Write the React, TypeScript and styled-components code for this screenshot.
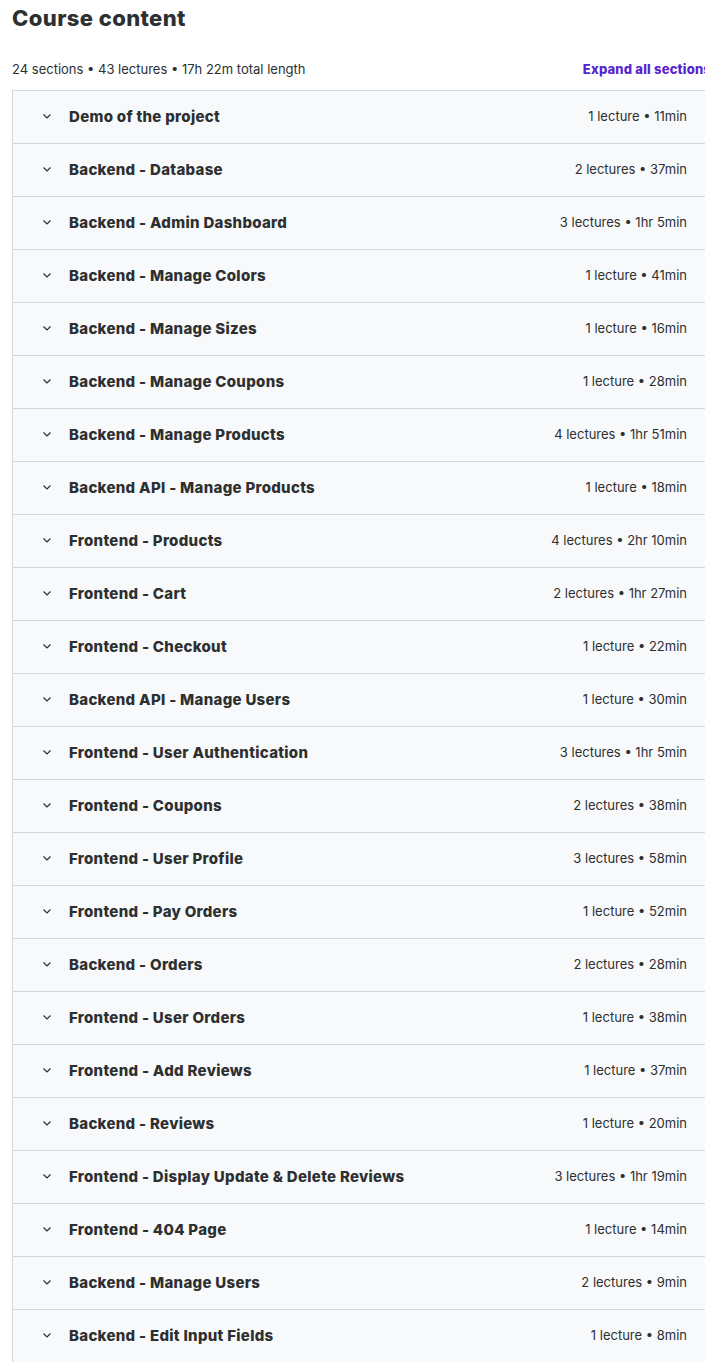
import React from "react";
import styled, { createGlobalStyle } from "styled-components";

const Global = createGlobalStyle`
  html, body { margin: 0; padding: 0; background: #fff; overflow-x: hidden; }
  body { font-family: Inter, "Noto Sans", sans-serif; color: #2d2f31; }
`;

const Page = styled.div`
  padding: 0 0 0 12px;
  width: 699px;
`;

const Title = styled.h2`
  margin: 0;
  padding-top: 4px;
  font-size: 22px;
  line-height: 28px;
  font-weight: 800;
  letter-spacing: 0.4px;
  color: #2d2f31;
`;

const MetaRow = styled.div`
  display: flex;
  justify-content: space-between;
  align-items: center;
  margin-top: 28px;
  height: 18px;
  margin-bottom: 12px;
`;

const Meta = styled.span`
  font-size: 13px;
  color: #2d2f31;
`;

const ExpandLink = styled.span`
  font-size: 13px;
  font-weight: 800;
  letter-spacing: 0.2px;
  color: #5624d0;
  white-space: nowrap;
`;

const Accordion = styled.div`
  border: 1px solid #d1d7dc;
  border-top: none;
  border-bottom: none;
`;

const Row = styled.div`
  display: flex;
  align-items: center;
  height: 52px;
  box-sizing: border-box;
  height: 53px;
  padding: 0 23px 2px 28px;
  border-top: 1px solid #d1d7dc;
  background: #f7f9fa;
`;

const Chevron = styled.svg`
  width: 12px;
  height: 12px;
  margin-right: 16px;
  flex: none;
`;

const SectionTitle = styled.span`
  flex: 1;
  font-size: 15px;
  font-weight: 800;
  letter-spacing: 0.3px;
  color: #2d2f31;
`;

const SectionMeta = styled.span`
  font-size: 13px;
  color: #2d2f31;
  white-space: nowrap;
`;

const sections: [string, string][] = [
  ["Demo of the project", "1 lecture • 11min"],
  ["Backend - Database", "2 lectures • 37min"],
  ["Backend - Admin Dashboard", "3 lectures • 1hr 5min"],
  ["Backend - Manage Colors", "1 lecture • 41min"],
  ["Backend - Manage Sizes", "1 lecture • 16min"],
  ["Backend - Manage Coupons", "1 lecture • 28min"],
  ["Backend - Manage Products", "4 lectures • 1hr 51min"],
  ["Backend API - Manage Products", "1 lecture • 18min"],
  ["Frontend - Products", "4 lectures • 2hr 10min"],
  ["Frontend - Cart", "2 lectures • 1hr 27min"],
  ["Frontend - Checkout", "1 lecture • 22min"],
  ["Backend API - Manage Users", "1 lecture • 30min"],
  ["Frontend - User Authentication", "3 lectures • 1hr 5min"],
  ["Frontend - Coupons", "2 lectures • 38min"],
  ["Frontend - User Profile", "3 lectures • 58min"],
  ["Frontend - Pay Orders", "1 lecture • 52min"],
  ["Backend - Orders", "2 lectures • 28min"],
  ["Frontend - User Orders", "1 lecture • 38min"],
  ["Frontend - Add Reviews", "1 lecture • 37min"],
  ["Backend - Reviews", "1 lecture • 20min"],
  ["Frontend - Display Update & Delete Reviews", "3 lectures • 1hr 19min"],
  ["Frontend - 404 Page", "1 lecture • 14min"],
  ["Backend - Manage Users", "2 lectures • 9min"],
  ["Backend - Edit Input Fields", "1 lecture • 8min"],
];

export default function App() {
  return (
    <>
      <Global />
      <Page>
        <Title>Course content</Title>
        <MetaRow>
          <Meta>24 sections • 43 lectures • 17h 22m total length</Meta>
          <ExpandLink>Expand all sections</ExpandLink>
        </MetaRow>
        <Accordion>
          {sections.map(([t, m]) => (
            <Row key={t}>
              <Chevron viewBox="0 0 12 12">
                <polyline points="2.5,4.5 6,8 9.5,4.5" fill="none" stroke="#2d2f31" strokeWidth="1.2" />
              </Chevron>
              <SectionTitle>{t}</SectionTitle>
              <SectionMeta>{m}</SectionMeta>
            </Row>
          ))}
        </Accordion>
      </Page>
    </>
  );
}
